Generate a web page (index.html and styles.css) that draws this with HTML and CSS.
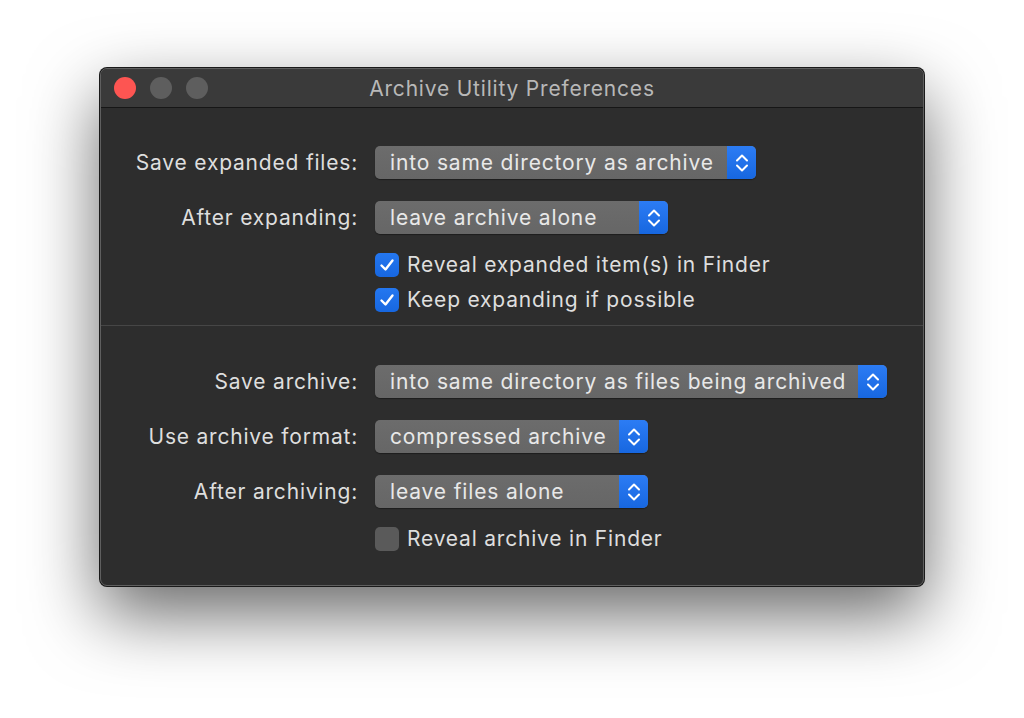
FILE: index.html
```html
<!DOCTYPE html>
<html lang="en">
<head>
    <meta charset="UTF-8">
    <title>Archive Utility Preferences</title>
    <link rel="stylesheet" href="styles.css">
</head>
<body>
    <div class="stage">
        <div class="window">
            <div class="titlebar">
                <div class="lights">
                    <span class="light close"></span>
                    <span class="light"></span>
                    <span class="light"></span>
                </div>
                <div class="title">Archive Utility Preferences</div>
            </div>

            <div class="section top">
                <div class="row">
                    <div class="label">Save expanded files:</div>
                    <div class="popup w-381">
                        <span class="popup-text">into same directory as archive</span>
                        <span class="stepper"><svg width="16" height="24" viewBox="0 0 16 24"><path d="M3 9.5 L8 4.5 L13 9.5 M3 14.5 L8 19.5 L13 14.5" fill="none" stroke="#fff" stroke-width="2" stroke-linecap="round" stroke-linejoin="round"/></svg></span>
                    </div>
                </div>
                <div class="row">
                    <div class="label">After expanding:</div>
                    <div class="popup w-293">
                        <span class="popup-text">leave archive alone</span>
                        <span class="stepper"><svg width="16" height="24" viewBox="0 0 16 24"><path d="M3 9.5 L8 4.5 L13 9.5 M3 14.5 L8 19.5 L13 14.5" fill="none" stroke="#fff" stroke-width="2" stroke-linecap="round" stroke-linejoin="round"/></svg></span>
                    </div>
                </div>
                <div class="check-row first">
                    <span class="box on"><svg width="18" height="18" viewBox="0 0 18 18"><path d="M3.5 9.5 L7.5 13.5 L14.5 4.5" fill="none" stroke="#fff" stroke-width="2.4" stroke-linecap="round" stroke-linejoin="round"/></svg></span>
                    <span class="check-text">Reveal expanded item(s) in Finder</span>
                </div>
                <div class="check-row">
                    <span class="box on"><svg width="18" height="18" viewBox="0 0 18 18"><path d="M3.5 9.5 L7.5 13.5 L14.5 4.5" fill="none" stroke="#fff" stroke-width="2.4" stroke-linecap="round" stroke-linejoin="round"/></svg></span>
                    <span class="check-text">Keep expanding if possible</span>
                </div>
            </div>

            <div class="separator"></div>

            <div class="section bottom">
                <div class="row">
                    <div class="label">Save archive:</div>
                    <div class="popup w-512">
                        <span class="popup-text">into same directory as files being archived</span>
                        <span class="stepper"><svg width="16" height="24" viewBox="0 0 16 24"><path d="M3 9.5 L8 4.5 L13 9.5 M3 14.5 L8 19.5 L13 14.5" fill="none" stroke="#fff" stroke-width="2" stroke-linecap="round" stroke-linejoin="round"/></svg></span>
                    </div>
                </div>
                <div class="row">
                    <div class="label">Use archive format:</div>
                    <div class="popup w-273">
                        <span class="popup-text">compressed archive</span>
                        <span class="stepper"><svg width="16" height="24" viewBox="0 0 16 24"><path d="M3 9.5 L8 4.5 L13 9.5 M3 14.5 L8 19.5 L13 14.5" fill="none" stroke="#fff" stroke-width="2" stroke-linecap="round" stroke-linejoin="round"/></svg></span>
                    </div>
                </div>
                <div class="row">
                    <div class="label">After archiving:</div>
                    <div class="popup w-273">
                        <span class="popup-text">leave files alone</span>
                        <span class="stepper"><svg width="16" height="24" viewBox="0 0 16 24"><path d="M3 9.5 L8 4.5 L13 9.5 M3 14.5 L8 19.5 L13 14.5" fill="none" stroke="#fff" stroke-width="2" stroke-linecap="round" stroke-linejoin="round"/></svg></span>
                    </div>
                </div>
                <div class="check-row first">
                    <span class="box"></span>
                    <span class="check-text">Reveal archive in Finder</span>
                </div>
            </div>
        </div>
    </div>
</body>
</html>
```

FILE: styles.css
```css
body, html {
    margin: 0;
    padding: 0;
    height: 100%;
    background: #ffffff;
    font-family: "Inter", "Noto Sans", sans-serif;
}
.stage {
    box-sizing: border-box;
    min-height: 718px;
    padding: 68px 100px;
}
.window {
    width: 824px;
    box-sizing: border-box;
    background: #2d2d2d;
    border: 1px solid #5f5f5f;
    border-radius: 7px;
    box-shadow: 0 0 0 1px #1a1a1a, 0 28px 70px rgba(0, 0, 0, 0.6);
    overflow: hidden;
    color: #dedede;
}
.titlebar {
    height: 38px;
    background: #3a3a3a;
    border-bottom: 1px solid #161616;
    display: flex;
    align-items: center;
    position: relative;
}
.lights {
    display: flex;
    gap: 14px;
    padding-left: 13px;
}
.light {
    width: 22px;
    height: 22px;
    border-radius: 50%;
    background: #5e5e5e;
}
.light.close {
    background: #fd5552;
}
.title {
    position: absolute;
    left: 0;
    right: 0;
    text-align: center;
    color: #b8b8b8;
    font-size: 21px;
    letter-spacing: 0.8px;
}
.section.top {
    padding: 38px 0 8px;
}
.section.bottom {
    padding: 39px 0 29px;
}
.row {
    display: flex;
    align-items: center;
    height: 33px;
    margin-bottom: 22px;
}
.check-row.first {
    margin-top: -9px;
}
.label {
    width: 257px;
    text-align: right;
    padding-right: 17px;
    font-size: 21px;
    letter-spacing: 0.8px;
    white-space: nowrap;
}
.popup {
    display: flex;
    height: 33px;
    border-radius: 5px;
    overflow: hidden;
    background: linear-gradient(#6c6c6c, #666666);
    box-shadow: 0 1px 1px rgba(0, 0, 0, 0.35);
}
.w-381 { width: 381px; }
.w-293 { width: 293px; }
.w-512 { width: 512px; }
.w-273 { width: 273px; }
.popup-text {
    flex: 1;
    display: flex;
    align-items: center;
    padding-left: 15px;
    font-size: 21px;
    letter-spacing: 0.85px;
    color: #e8e8e8;
    white-space: nowrap;
}
.stepper {
    width: 29px;
    display: flex;
    align-items: center;
    justify-content: center;
    background: linear-gradient(#2c7cf4, #1767e0);
}
.check-row {
    display: flex;
    align-items: center;
    height: 35px;
    padding-left: 274px;
}
.box {
    width: 24px;
    height: 24px;
    box-sizing: border-box;
    border-radius: 5px;
    background: #5a5a5a;
    display: flex;
    align-items: center;
    justify-content: center;
    margin-right: 8px;
}
.box.on {
    background: linear-gradient(#2477f0, #1767e0);
}
.check-text {
    font-size: 21px;
    letter-spacing: 0.8px;
}
.separator {
    height: 1px;
    background: #464646;
}
```
